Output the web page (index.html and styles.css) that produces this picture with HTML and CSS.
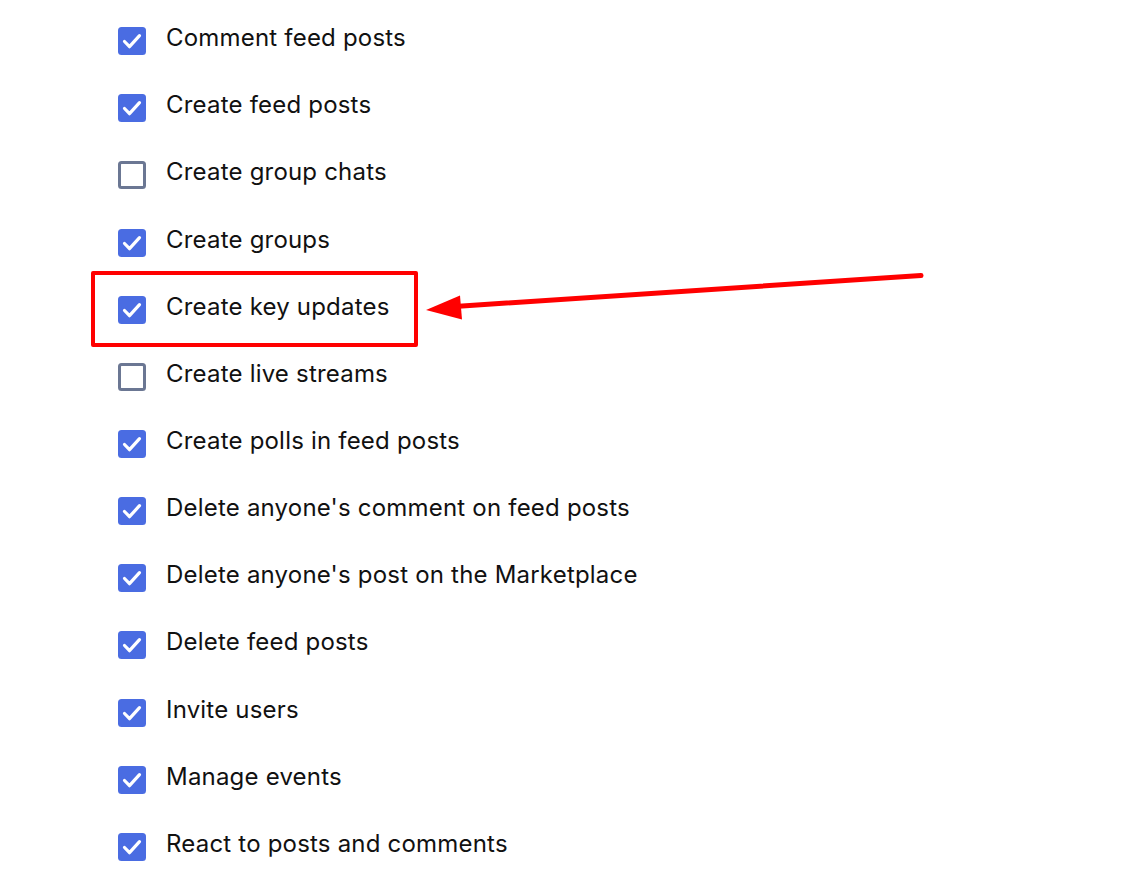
FILE: index.html
```html
<!DOCTYPE html>
<html lang="en">
<head>
<meta charset="utf-8">
<link rel="stylesheet" href="styles.css">
</head>
<body>
<div class="page">
  <ul class="perm-list">
    <li class="perm"><span class="box checked"><svg viewBox="0 0 28 28"><path d="M6.5 14.5l5 5.2 10-11"/></svg></span><span class="label">Comment feed posts</span></li>
    <li class="perm"><span class="box checked"><svg viewBox="0 0 28 28"><path d="M6.5 14.5l5 5.2 10-11"/></svg></span><span class="label">Create feed posts</span></li>
    <li class="perm"><span class="box"></span><span class="label">Create group chats</span></li>
    <li class="perm"><span class="box checked"><svg viewBox="0 0 28 28"><path d="M6.5 14.5l5 5.2 10-11"/></svg></span><span class="label">Create groups</span></li>
    <li class="perm"><span class="box checked"><svg viewBox="0 0 28 28"><path d="M6.5 14.5l5 5.2 10-11"/></svg></span><span class="label">Create key updates</span></li>
    <li class="perm"><span class="box"></span><span class="label">Create live streams</span></li>
    <li class="perm"><span class="box checked"><svg viewBox="0 0 28 28"><path d="M6.5 14.5l5 5.2 10-11"/></svg></span><span class="label">Create polls in feed posts</span></li>
    <li class="perm"><span class="box checked"><svg viewBox="0 0 28 28"><path d="M6.5 14.5l5 5.2 10-11"/></svg></span><span class="label">Delete anyone's comment on feed posts</span></li>
    <li class="perm"><span class="box checked"><svg viewBox="0 0 28 28"><path d="M6.5 14.5l5 5.2 10-11"/></svg></span><span class="label">Delete anyone's post on the Marketplace</span></li>
    <li class="perm"><span class="box checked"><svg viewBox="0 0 28 28"><path d="M6.5 14.5l5 5.2 10-11"/></svg></span><span class="label">Delete feed posts</span></li>
    <li class="perm"><span class="box checked"><svg viewBox="0 0 28 28"><path d="M6.5 14.5l5 5.2 10-11"/></svg></span><span class="label">Invite users</span></li>
    <li class="perm"><span class="box checked"><svg viewBox="0 0 28 28"><path d="M6.5 14.5l5 5.2 10-11"/></svg></span><span class="label">Manage events</span></li>
    <li class="perm"><span class="box checked"><svg viewBox="0 0 28 28"><path d="M6.5 14.5l5 5.2 10-11"/></svg></span><span class="label">React to posts and comments</span></li>
  </ul>
  <div class="highlight"></div>
  <svg class="arrow" width="1122" height="886" viewBox="0 0 1122 886">
    <line x1="921" y1="275.5" x2="455" y2="306.5"/>
    <polygon points="426,310 460,295.5 462,319.5"/>
  </svg>
</div>
</body>
</html>
```

FILE: styles.css
```css
html, body {
  margin: 0;
  padding: 0;
  background: #ffffff;
}

.page {
  position: relative;
  width: 1122px;
  height: 886px;
  overflow: hidden;
  font-family: Inter, "Noto Sans", "Liberation Sans", sans-serif;
  color: #111111;
}

.perm-list {
  list-style: none;
  margin: 0;
  padding: 7.5px 0 0 118px;
  display: grid;
  grid-auto-rows: 67.17px;
}

.perm {
  display: flex;
  align-items: center;
  gap: 20px;
}

.label {
  font-size: 24px;
  line-height: 28px;
  margin-top: -6px;
  letter-spacing: 0.2px;
}

.box {
  box-sizing: border-box;
  width: 28px;
  height: 28px;
  flex: 0 0 28px;
  border: 3px solid #6b7793;
  border-radius: 3.5px;
  background: #ffffff;
  display: flex;
}

.box.checked {
  border: none;
  background: #4a6ce2;
}

.box svg {
  width: 28px;
  height: 28px;
}

.box svg path {
  fill: none;
  stroke: #ffffff;
  stroke-width: 3.2;
  stroke-linecap: round;
  stroke-linejoin: round;
}

.highlight {
  position: absolute;
  left: 91px;
  top: 271px;
  width: 327px;
  height: 76px;
  box-sizing: border-box;
  border: 4.5px solid #ff0000;
  border-radius: 2px;
}

.arrow {
  position: absolute;
  left: 0;
  top: 0;
}

.arrow line {
  stroke: #ff0000;
  stroke-width: 5;
  stroke-linecap: round;
}

.arrow polygon {
  fill: #ff0000;
}
```
